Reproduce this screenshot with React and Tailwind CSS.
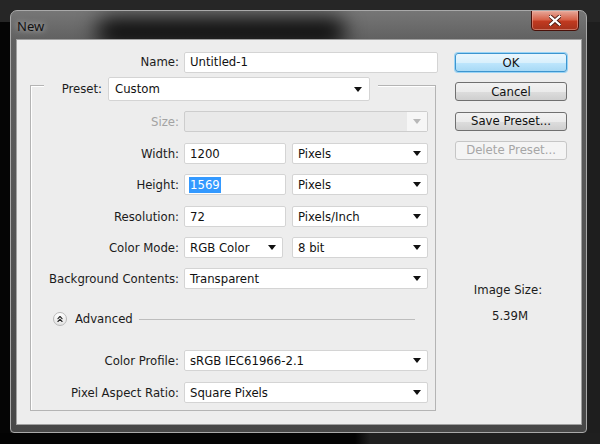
import React from 'react';
import { ChevronsUp } from 'lucide-react';

const Arrow = ({ disabled }) => (
  <svg width="8" height="5" viewBox="0 0 8 5" className="shrink-0">
    <path d="M0 0H8L4 5Z" fill={disabled ? '#b8b8b8' : '#111'} />
  </svg>
);

const fieldBase =
  'flex items-center bg-white border border-[#d4d4d4] rounded-[2px] h-[21px] pl-[5px] text-[#111] shrink-0';

function Select({ value, className }) {
  return (
    <div className={`${fieldBase} pr-[6px] justify-between ${className}`}>
      <span className="whitespace-nowrap">{value}</span>
      <Arrow />
    </div>
  );
}

function Input({ value, className }) {
  return (
    <div className={`${fieldBase} ${className}`}>
      <span className="whitespace-nowrap">{value}</span>
    </div>
  );
}

function Label({ children, disabled }) {
  return (
    <div
      className={`w-[149px] shrink-0 text-right pr-[1px] whitespace-nowrap ${
        disabled ? 'text-[#a3a3a3]' : 'text-[#1b1b1b]'
      }`}
    >
      {children}
    </div>
  );
}

function Button({ children, primary, disabled }) {
  let cls =
    'h-[19px] w-[112px] rounded-[3px] flex items-center justify-center text-[13px] ';
  if (primary)
    cls +=
      'border border-[#3d95cf] bg-[linear-gradient(#eaf6fd,#d9f0fc_50%,#bee6fd_51%,#a7d9f5)] text-[#111] shadow-[0_0_0_1px_#9bd4f5]';
  else if (disabled)
    cls += 'border border-[#c6c6c6] bg-[#f4f4f4] text-[#a6a6a6]';
  else
    cls +=
      'border border-[#707070] bg-[linear-gradient(#f2f2f2,#ebebeb_50%,#dddddd_51%,#cfcfcf)] text-[#111]';
  return <div className={cls}>{children}</div>;
}

export default function App() {
  return (
    <div className="w-[600px] h-[444px] overflow-hidden bg-[linear-gradient(#262626_0_22px,transparent_22px),linear-gradient(to_right,#050505_0_10px,#1e1e1e_10px)] pt-[10px] pl-[10px] font-['DejaVu_Sans_Condensed','DejaVu_Sans',sans-serif] text-[13px] leading-[16px]">
      <div className="relative w-[577px] h-[423px] rounded-t-[7px] rounded-b-[4px] border border-[#a9a9a9] bg-[linear-gradient(#767676,#606060_30px,#474747)] flex flex-col overflow-hidden">
        {/* title bar */}
        <div className="relative h-[28px] shrink-0 flex items-start">
          <div className="absolute left-[85px] top-[6px] w-[250px] h-[30px] bg-black/85 blur-[10px] rounded-full" />
          <span className="relative ml-[6px] mt-[7px] text-[13px] text-[#111] font-['Noto_Sans',sans-serif] [text-shadow:0_0_6px_#ffffffb0]">
            New
          </span>
          <div className="absolute right-[7px] top-[-1px] w-[48px] h-[21px] rounded-b-[4px] border border-[#4a1109] bg-[linear-gradient(#e7a899,#d7634a_45%,#c03a20_55%,#a3321c)] shadow-[inset_0_0_0_1px_#f2b3a680] flex items-center justify-center">
            <svg width="12" height="11" viewBox="0 0 12 11">
              <path
                d="M1.5 1.5L10.5 9.5M10.5 1.5L1.5 9.5"
                stroke="#4a1a12"
                strokeWidth="4"
                strokeLinecap="square"
              />
              <path
                d="M1.5 1.5L10.5 9.5M10.5 1.5L1.5 9.5"
                stroke="#ffffff"
                strokeWidth="2.2"
                strokeLinecap="square"
              />
            </svg>
          </div>
        </div>

        {/* client area */}
        <div className="relative ml-[5px] mr-[4px] h-[386px] border border-[#a0a0a0] bg-[#ededed] flex shrink-0">
          {/* left column */}
          <div className="w-[421px] flex flex-col shrink-0">
            <div className="mt-[12px] flex items-center h-[20px]">
              <div className="w-[163px] text-right pr-[1px] text-[#1b1b1b]">Name:</div>
              <Input value="Untitled-1" className="ml-[4px] w-[254px] h-[20px]" />
            </div>

            {/* group box */}
            <div className="mt-[13px] ml-[13px] w-[406px] border border-[#b4b4b4] shadow-[inset_1px_1px_0_#fff] flex flex-col pb-[7px]">
              <div className="-mt-[9px] flex items-center h-[24px]">
                <div className="ml-[13px] bg-[#ededed] flex items-center pr-[8px]">
                  <div className="w-[59px] text-right pr-[1px] text-[#1b1b1b]">Preset:</div>
                  <div className="ml-[5px] w-[262px] h-[24px] flex items-center justify-between bg-white border border-[#d4d4d4] rounded-[2px] pl-[6px] pr-[7px] text-[#111]">
                    <span>Custom</span>
                    <Arrow />
                  </div>
                </div>
              </div>

              <div className="mt-[10px] flex items-center">
                <Label disabled>Size:</Label>
                <div className="ml-[4px] w-[244px] h-[21px] flex border border-[#cdcdcd] rounded-[2px] bg-[#e9e9e9]">
                  <div className="flex-1" />
                  <div className="w-[20px] bg-[#f6f6f6] flex items-center justify-center">
                    <Arrow disabled />
                  </div>
                </div>
              </div>

              <div className="mt-[11px] flex items-center">
                <Label>Width:</Label>
                <Input value="1200" className="ml-[4px] w-[102px]" />
                <Select value="Pixels" className="ml-[6px] w-[136px]" />
              </div>

              <div className="mt-[10px] flex items-center">
                <Label>Height:</Label>
                <div className={`${fieldBase} ml-[4px] w-[102px]`}>
                  <span className="bg-[#3399ff] text-white px-[1px] -ml-[1px]">1569</span>
                </div>
                <Select value="Pixels" className="ml-[6px] w-[136px]" />
              </div>

              <div className="mt-[11px] flex items-center">
                <Label>Resolution:</Label>
                <Input value="72" className="ml-[4px] w-[102px]" />
                <Select value="Pixels/Inch" className="ml-[6px] w-[136px]" />
              </div>

              <div className="mt-[10px] flex items-center">
                <Label>Color Mode:</Label>
                <Select value="RGB Color" className="ml-[4px] w-[99px]" />
                <Select value="8 bit" className="ml-[9px] w-[136px]" />
              </div>

              <div className="mt-[10px] flex items-center">
                <Label>Background Contents:</Label>
                <Select value="Transparent" className="ml-[4px] w-[244px]" />
              </div>

              <div className="mt-[23px] flex items-center h-[14px]">
                <div className="ml-[22px] w-[14px] h-[14px] rounded-full border border-[#b9b9b9] bg-[linear-gradient(#ffffff,#e2e2e2)] flex items-center justify-center shrink-0">
                  <ChevronsUp size={10} strokeWidth={2.6} color="#222" />
                </div>
                <span className="ml-[8px] text-[#1b1b1b]">Advanced</span>
                <div className="ml-[6px] mr-[20px] flex-1 h-px bg-[#bdbdbd]" />
              </div>

              <div className="mt-[24px] flex items-center">
                <Label>Color Profile:</Label>
                <Select value="sRGB IEC61966-2.1" className="ml-[4px] w-[244px]" />
              </div>

              <div className="mt-[11px] flex items-center">
                <Label>Pixel Aspect Ratio:</Label>
                <Select value="Square Pixels" className="ml-[4px] w-[244px]" />
              </div>
            </div>
          </div>

          {/* right column */}
          <div className="ml-[17px] w-[112px] mt-[13px] flex flex-col shrink-0">
            <div className="flex flex-col gap-[10.3px]">
              <Button primary>OK</Button>
              <Button>Cancel</Button>
              <Button>Save Preset...</Button>
              <Button disabled>Delete Preset...</Button>
            </div>
            <div className="mt-[122px] text-center text-[#1b1b1b] pr-[6px]">Image Size:</div>
            <div className="mt-[10px] text-center text-[#1b1b1b] pr-[2px]">5.39M</div>
          </div>
        </div>
      </div>
      <div className="-ml-[10px] h-[11px] bg-[linear-gradient(to_right,#030303_0_355px,#1f1f1f_370px)]" />
    </div>
  );
}
